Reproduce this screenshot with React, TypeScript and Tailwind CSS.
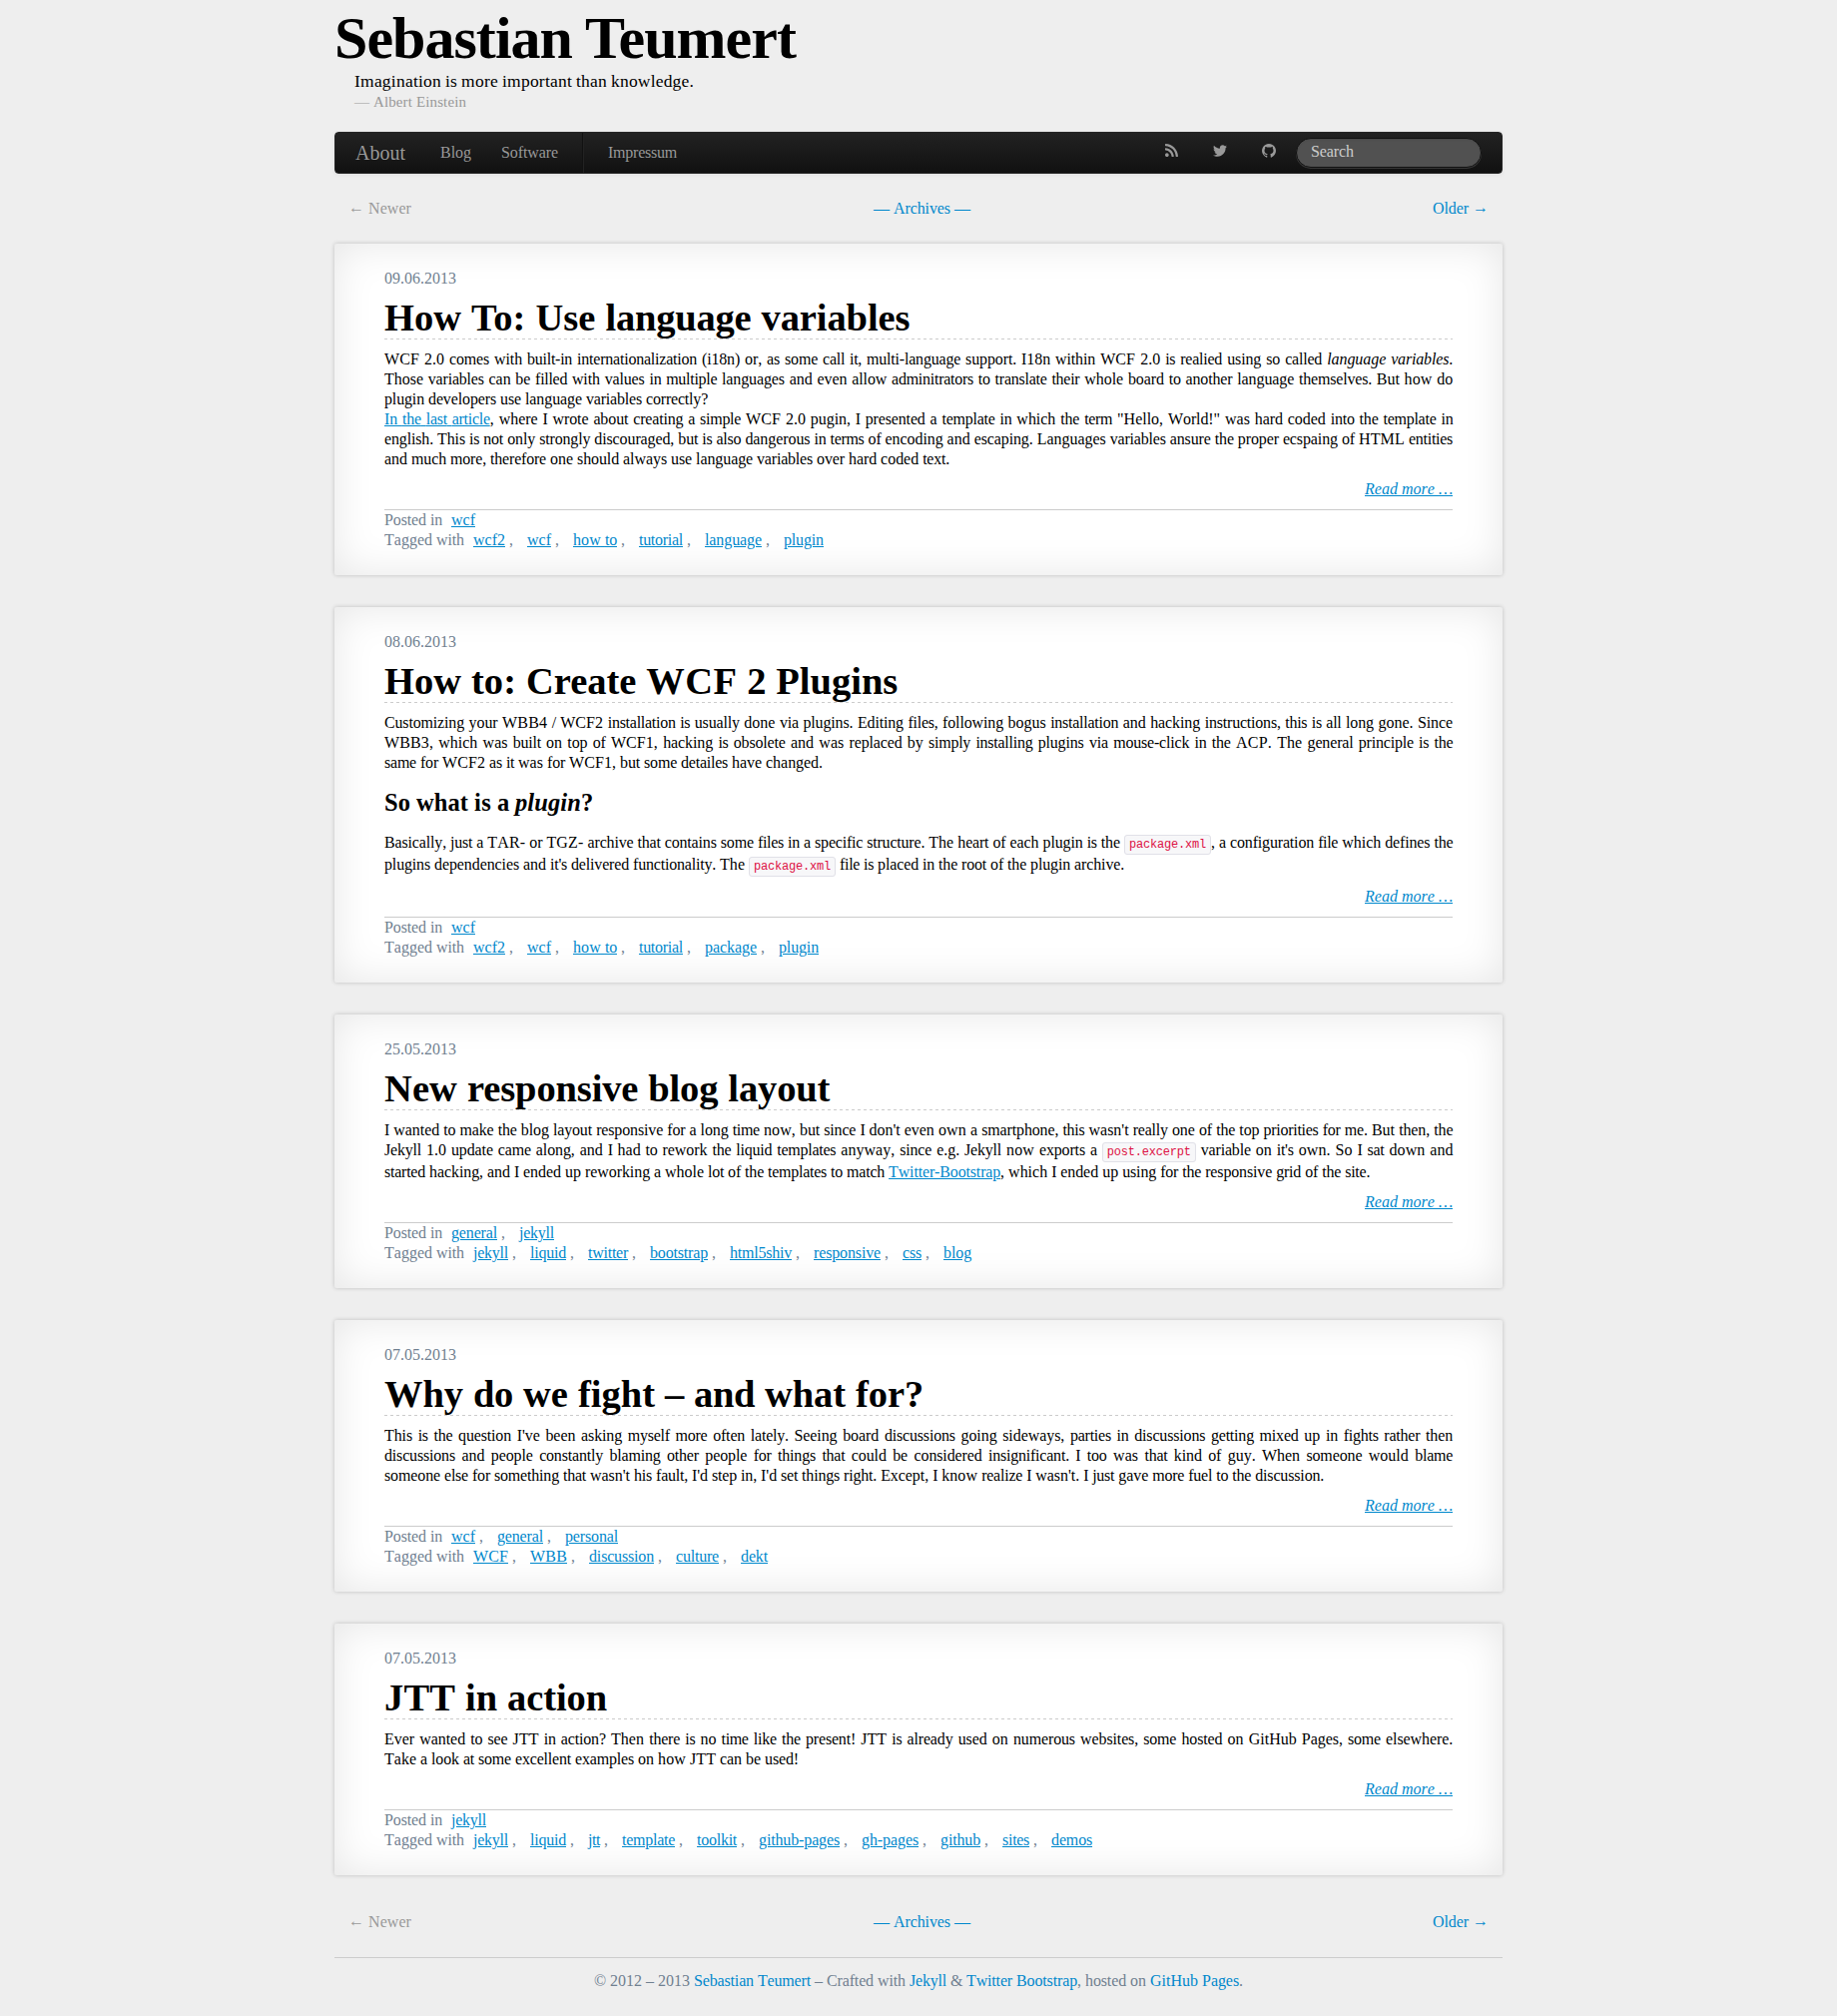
import React from "react";
import { FaRss, FaTwitter } from "react-icons/fa";

type Post = {
  date: string;
  title: string;
  body: React.ReactNode;
  categories: string[];
  tags: string[];
};

const link = "text-[#0088cc]";
const ulink = "text-[#0088cc] underline";

/* ---- whole-pixel glyph advances ---- */

const ctx = document.createElement("canvas").getContext("2d")!;
const advances = new Map<string, number>();

function advance(ch: string, font: string) {
  const key = font + ch;
  let w = advances.get(key);
  if (w === undefined) {
    ctx.font = font;
    w = ctx.measureText(ch).width;
    advances.set(key, w);
  }
  return w;
}

function snapText(text: string, font: string) {
  return text.split(/(\s+)/).map((part, i) => {
    if (!part) return null;
    const chars = [...part];
    const delta = chars.reduce((sum, ch) => {
      const w = advance(ch, font);
      return sum + Math.round(w) - w;
    }, 0);
    const spacing = delta / chars.length;
    if (Math.abs(spacing) < 0.01) return part;
    return (
      <span key={i} style={{ letterSpacing: `${spacing.toFixed(4)}px` }}>
        {part}
      </span>
    );
  });
}

function snapNode(node: React.ReactNode, size: number, bold: boolean, italic: boolean): React.ReactNode {
  if (typeof node === "string") {
    const font = `${italic ? "italic " : ""}${bold ? "bold " : ""}${size}px "Liberation Serif"`;
    return snapText(node, font);
  }
  if (Array.isArray(node)) {
    return node.map((n, i) => <React.Fragment key={i}>{snapNode(n, size, bold, italic)}</React.Fragment>);
  }
  if (React.isValidElement<{ children?: React.ReactNode }>(node)) {
    if (node.type === Code || node.props.children === undefined) return node;
    return React.cloneElement(node, {}, snapNode(node.props.children, size, bold, italic || node.type === "em"));
  }
  return node;
}

function T({
  size = 16,
  bold = false,
  italic = false,
  children,
}: {
  size?: number;
  bold?: boolean;
  italic?: boolean;
  children: React.ReactNode;
}) {
  return <>{snapNode(children, size, bold, italic)}</>;
}

function Code({ children }: { children: React.ReactNode }) {
  return (
    <code className="rounded-[3px] border border-[#e1e1e8] bg-[#f7f7f9] px-1 py-0.5 font-['Liberation_Mono',monospace] text-[12px] tracking-[-0.2px] whitespace-nowrap text-[#dd1144]">
      {children}
    </code>
  );
}

const posts: Post[] = [
  {
    date: "09.06.2013",
    title: "How To: Use language variables",
    body: (
      <p className="mb-2.5">
        <T>
          WCF 2.0 comes with built-in internationalization (i18n) or, as some call it, multi-language support. I18n
          within WCF 2.0 is realied using so called <em>language variables</em>. Those variables can be filled with
          values in multiple languages and even allow adminitrators to translate their whole board to another language
          themselves. But how do plugin developers use language variables correctly?
          <br />
          <a className={ulink}>In the last article</a>, where I wrote about creating a simple WCF 2.0 pugin, I
          presented a template in which the term "Hello, World!" was hard coded into the template in english. This is
          not only strongly discouraged, but is also dangerous in terms of encoding and escaping. Languages variables
          ansure the proper ecspaing of HTML entities and much more, therefore one should always use language
          variables over hard coded text.
        </T>
      </p>
    ),
    categories: ["wcf"],
    tags: ["wcf2", "wcf", "how to", "tutorial", "language", "plugin"],
  },
  {
    date: "08.06.2013",
    title: "How to: Create WCF 2 Plugins",
    body: (
      <>
        <p className="mb-2.5">
          <T>
            Customizing your WBB4 / WCF2 installation is usually done via plugins. Editing files, following bogus
            installation and hacking instructions, this is all long gone. Since WBB3, which was built on top of WCF1,
            hacking is obsolete and was replaced by simply installing plugins via mouse-click in the ACP. The general
            principle is the same for WCF2 as it was for WCF1, but some detailes have changed.
          </T>
        </p>
        <h3 className="my-2.5 text-[24.5px] leading-[40px] font-bold">
          <T size={24.5} bold>
            So what is a <em>plugin</em>?
          </T>
        </h3>
        <p className="mb-2.5">
          <T>
            Basically, just a TAR- or TGZ- archive that contains some files in a specific structure. The heart of each
            plugin is the <Code>package.xml</Code>, a configuration file which defines the plugins dependencies and
            it's delivered functionality. The <Code>package.xml</Code> file is placed in the root of the plugin
            archive.
          </T>
        </p>
      </>
    ),
    categories: ["wcf"],
    tags: ["wcf2", "wcf", "how to", "tutorial", "package", "plugin"],
  },
  {
    date: "25.05.2013",
    title: "New responsive blog layout",
    body: (
      <p className="mb-2.5">
        <T>
          I wanted to make the blog layout responsive for a long time now, but since I don't even own a smartphone,
          this wasn't really one of the top priorities for me. But then, the Jekyll 1.0 update came along, and I had
          to rework the liquid templates anyway, since e.g. Jekyll now exports a <Code>post.excerpt</Code> variable on
          it's own. So I sat down and started hacking, and I ended up reworking a whole lot of the templates to
          match <a className={ulink}>Twitter-Bootstrap</a>, which I ended up using for the responsive grid of the
          site.
        </T>
      </p>
    ),
    categories: ["general", "jekyll"],
    tags: ["jekyll", "liquid", "twitter", "bootstrap", "html5shiv", "responsive", "css", "blog"],
  },
  {
    date: "07.05.2013",
    title: "Why do we fight – and what for?",
    body: (
      <p className="mb-2.5">
        <T>
          This is the question I've been asking myself more often lately. Seeing board discussions going sideways,
          parties in discussions getting mixed up in fights rather then discussions and people constantly blaming
          other people for things that could be considered insignificant. I too was that kind of guy. When someone
          would blame someone else for something that wasn't his fault, I'd step in, I'd set things right. Except, I
          know realize I wasn't. I just gave more fuel to the discussion.
        </T>
      </p>
    ),
    categories: ["wcf", "general", "personal"],
    tags: ["WCF", "WBB", "discussion", "culture", "dekt"],
  },
  {
    date: "07.05.2013",
    title: "JTT in action",
    body: (
      <p className="mb-2.5">
        <T>
          Ever wanted to see JTT in action? Then there is no time like the present! JTT is already used on numerous
          websites, some hosted on GitHub Pages, some elsewhere. Take a look at some excellent examples on how JTT can
          be used!
        </T>
      </p>
    ),
    categories: ["jekyll"],
    tags: [
      "jekyll",
      "liquid",
      "jtt",
      "template",
      "toolkit",
      "github-pages",
      "gh-pages",
      "github",
      "sites",
      "demos",
    ],
  },
];

function TagLine({ label, items }: { label: string; items: string[] }) {
  return (
    <div>
      <T>{label}</T>{" "}
      {items.map((item, i) => (
        <React.Fragment key={item}>
          <span className="inline-block px-[5px]">
            <a className={ulink}>
              <T>{item}</T>
            </a>
            {i < items.length - 1 ? " ," : ""}
          </span>{" "}
        </React.Fragment>
      ))}
    </div>
  );
}

function Pager() {
  return (
    <nav className="flex justify-between px-[14px]">
      <span className="text-[#999999]">
        <span className="inline-block -translate-y-px">←</span> <T>Newer</T>
      </span>
      <a className={link}>
        <T>— Archives —</T>
      </a>
      <a className={link}>
        <T>Older</T> <span className="inline-block -translate-y-px">→</span>
      </a>
    </nav>
  );
}

function Article({ post }: { post: Post }) {
  return (
    <article className="mb-8 rounded-[2px] bg-white px-[50px] py-[25px] shadow-[0_0_4px_rgba(0,0,0,0.2),inset_0_0_40px_rgba(0,0,0,0.1)]">
      <div className="text-[#708090]">{post.date}</div>
      <h1 className="mt-2.5 pb-[2px] text-[38.5px] leading-[38px] font-bold [font-kerning:normal]">
        <T size={38.5} bold>
          {post.title}
        </T>
      </h1>
      <div className="mb-2.5 h-px bg-[repeating-linear-gradient(90deg,#cccccc_0_3px,transparent_3px_6px)]" />
      <div className="text-justify">{post.body}</div>
      <p className="mb-2.5 text-right">
        <a className={`${ulink} italic`}>
          <T italic>Read more …</T>
        </a>
      </p>
      <footer className="border-t border-[#cccccc] text-[#708090]">
        <TagLine label="Posted in" items={post.categories} />
        <TagLine label="Tagged with" items={post.tags} />
      </footer>
    </article>
  );
}

function GithubIcon() {
  return (
    <svg viewBox="0 128 1536 1536" fill="currentColor" className="mt-[11px] mr-5 size-[14px]">
      <path d="M768 128q209 0 385.5 103t279.5 279.5 103 385.5q0 251-146.5 451.5t-378.5 277.5q-27 5-40-7t-13-30q0-3 .5-76.5t.5-134.5q0-97-52-142 57-6 102.5-18t94-39 81-66.5 53-105 20.5-150.5q0-119-79-206 37-91-8-204-28-9-81 11t-92 44l-38 24q-93-26-192-26t-192 26q-16-11-42.5-27t-83.5-38.5-85-13.5q-45 113-8 204-79 87-79 206 0 85 20.5 150t52.5 105 80.5 67 94 39 102.5 18q-39 36-49 103-21 10-45 15t-57 5-65.5-21.5-55.5-62.5q-19-32-48.5-52t-49.5-24l-20-3q-21 0-29 4.5t-5 11.5 9 14 13 12l7 5q22 10 43.5 38t31.5 51l10 23q13 38 44 61.5t67 30 69.5 7 55.5-3.5l23-4q0 38 .5 88.5t.5 54.5q0 18-13 30t-40 7q-232-77-378.5-277.5t-146.5-451.5q0-209 103-385.5t279.5-279.5 385.5-103z" />
    </svg>
  );
}

function Navbar() {
  return (
    <nav className="flex h-[42px] rounded-[4px] border border-[#252525] bg-linear-to-b from-[#222222] to-[#111111] px-5 leading-[20px] text-[#999999] shadow-[0_1px_4px_rgba(0,0,0,0.065)] [text-shadow:0_-1px_0_rgba(0,0,0,0.25)]">
      <a className="py-2.5 pr-5 text-[20px]">
        <T size={20}>About</T>
      </a>
      <a className="px-[15px] py-2.5">
        <T>Blog</T>
      </a>
      <a className="px-[15px] py-2.5">
        <T>Software</T>
      </a>
      <span className="mx-[9px] h-10 w-0.5 border-r border-l border-r-[#222222] border-l-[#111111]" />
      <a className="px-[15px] py-2.5">
        <T>Impressum</T>
      </a>
      <div className="ml-auto flex">
        <FaRss className="mt-2.5 mr-[35px] h-[15px] w-[13px]" />
        <FaTwitter className="mt-[11px] mr-[35px] size-[14px]" />
        <GithubIcon />
        <div className="mt-[5px] h-[30px] w-[186px] rounded-[15px] border border-[#111111] bg-[#515151] px-[14px] pt-[3px] text-[#cccccc] shadow-[inset_0_1px_2px_rgba(0,0,0,0.1),0_1px_0_rgba(255,255,255,0.15)] [text-shadow:none]">
          <T>Search</T>
        </div>
      </div>
    </nav>
  );
}

export default function App() {
  return (
    <div className="h-[2019px] bg-[#eeeeee] font-['Liberation_Serif',serif] text-[16px] leading-[20px] text-black [font-kerning:none]">
      <div className="mx-auto w-[1170px]">
        <header className="h-[132px] pt-2">
          <h1 className="text-[60px] leading-[60px] font-bold tracking-[-0.97px] [font-kerning:normal]">
            Sebastian Teumert
          </h1>
          <blockquote className="pt-[2px] pl-5">
            <p className="text-[17.5px] leading-[22px]">
              <T size={17.5}>Imagination is more important than knowledge.</T>
            </p>
            <small className="block text-[15px] leading-[20px] text-[#999999]">
              <T size={15}>— Albert Einstein</T>
            </small>
          </blockquote>
        </header>
        <Navbar />
        <div className="pt-[25px] pb-[25px]">
          <Pager />
        </div>
        {posts.map((post) => (
          <Article key={post.title} post={post} />
        ))}
        <div className="pt-[5px] pb-[25px]">
          <Pager />
        </div>
        <footer className="border-t border-[#cccccc] pt-[13px] text-center text-[#708090]">
          <T>
            © 2012 – 2013 <a className={link}>Sebastian Teumert</a> – Crafted with <a className={link}>Jekyll</a> &amp;{" "}
            <a className={link}>Twitter Bootstrap</a>, hosted on <a className={link}>GitHub Pages</a>.
          </T>
        </footer>
      </div>
    </div>
  );
}
